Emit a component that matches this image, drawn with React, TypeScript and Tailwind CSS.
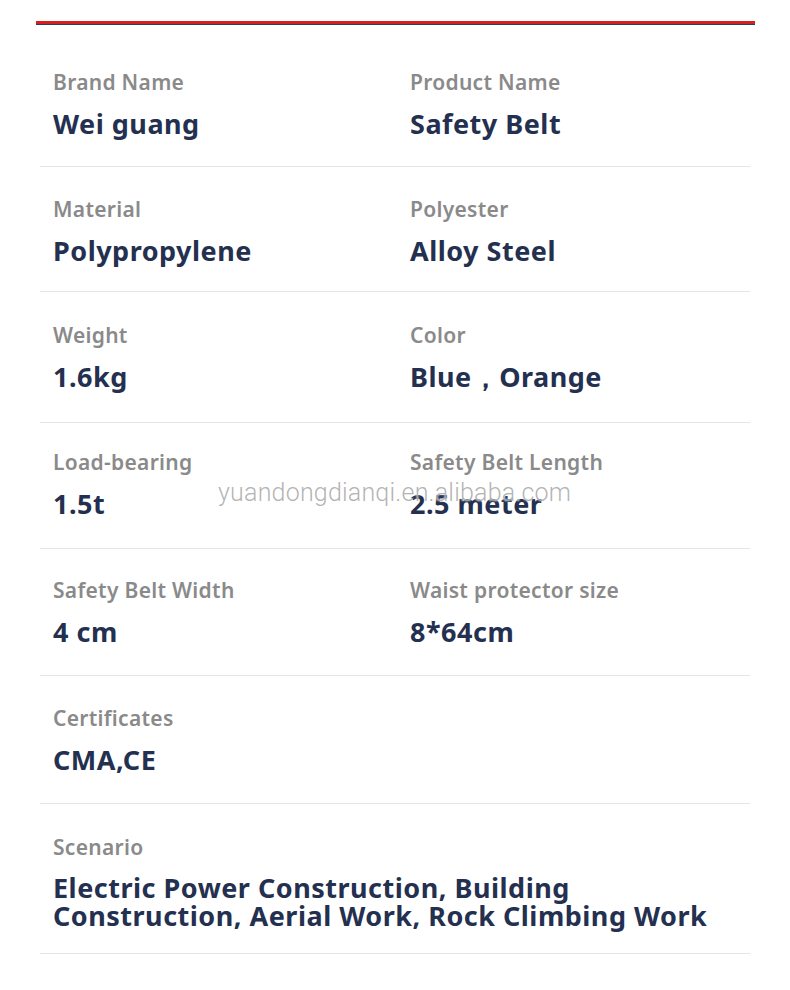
const rows: { h: string; pt: string; cells: { label: string; value: string }[] }[] = [
  {
    h: 'h-[127px]',
    pt: 'pt-[30px]',
    cells: [
      { label: 'Brand Name', value: 'Wei guang' },
      { label: 'Product Name', value: 'Safety Belt' },
    ],
  },
  {
    h: 'h-[125px]',
    pt: 'pt-[30px]',
    cells: [
      { label: 'Material', value: 'Polypropylene' },
      { label: 'Polyester', value: 'Alloy Steel' },
    ],
  },
  {
    h: 'h-[131px]',
    pt: 'pt-[31px]',
    cells: [
      { label: 'Weight', value: '1.6kg' },
      { label: 'Color', value: 'Blue，Orange' },
    ],
  },
  {
    h: 'h-[126px]',
    pt: 'pt-[27px]',
    cells: [
      { label: 'Load-bearing', value: '1.5t' },
      { label: 'Safety Belt Length', value: '2.5 meter' },
    ],
  },
  {
    h: 'h-[127px]',
    pt: 'pt-[29px]',
    cells: [
      { label: 'Safety Belt Width', value: '4 cm' },
      { label: 'Waist protector size', value: '8*64cm' },
    ],
  },
  { h: 'h-[128px]', pt: 'pt-[30px]', cells: [{ label: 'Certificates', value: 'CMA,CE' }] },
];

const labelCls = 'text-[21px] leading-[24px] font-semibold text-[#8a8a8a] tracking-[0.3px]';
const valueCls = 'text-[27px] font-bold text-[#24304f] tracking-[0.5px]';

function Cell({ label, value }: { label: string; value: string }) {
  return (
    <div className="flex flex-col">
      <div className={labelCls}>{label}</div>
      <div className={`mt-[15px] leading-[30px] ${valueCls}`}>{value}</div>
    </div>
  );
}

export default function App() {
  return (
    <div className="relative w-[790px] h-[990px] bg-white font-['Noto_Sans',sans-serif]">
      <div className="pt-[21px] pl-[36px] pr-[35px]">
        <div className="h-[3px] bg-[#d81f1f]" />
        <div className="h-[1px] bg-[#2f3b5c]" />
      </div>

      <div className="mx-[40px] pt-[15px]">
        {rows.map((row, i) => (
          <div
            key={i}
            className={`grid grid-cols-[357px_1fr] pl-[13px] border-b border-[#e5e5e5] box-border ${row.pt} ${row.h}`}
          >
            {row.cells.map((c) => (
              <Cell key={c.label} label={c.label} value={c.value} />
            ))}
          </div>
        ))}

        <div className="pl-[13px] pt-[31px] h-[150px] box-border border-b border-[#e5e5e5]">
          <div className={labelCls}>Scenario</div>
          <div className={`mt-[15px] leading-[28px] ${valueCls}`}>
            Electric Power Construction, Building
            <br />
            Construction, Aerial Work, Rock Climbing Work
          </div>
        </div>
      </div>

      {/* watermark over the load-bearing row */}
      <div className="absolute left-[218px] top-[478px] text-[25px] leading-[30px] tracking-[0.2px] font-light font-['Roboto',sans-serif] text-[#a0a0a0]/80 [text-shadow:0_0_2px_#fff]">
        yuandongdianqi.en.alibaba.com
      </div>
    </div>
  );
}
